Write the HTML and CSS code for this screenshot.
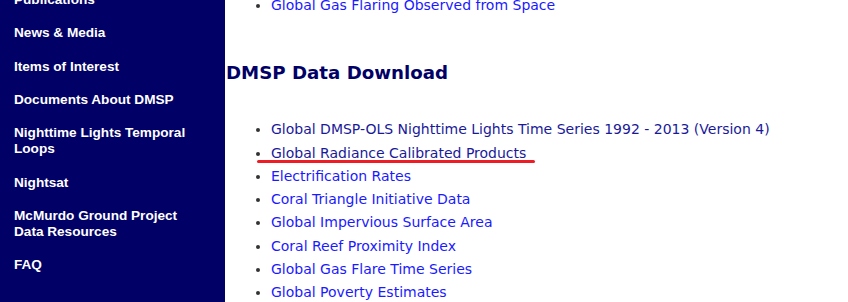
FILE: index.html
```html
<!DOCTYPE html>
<html lang="en">
<head>
  <meta charset="UTF-8" />
  <title>DMSP Data Download</title>
  <link rel="stylesheet" href="styles.css">
</head>
<body>

<div class="page">
  <!-- Left navigation -->
  <ul class="side-nav">
    <li><a href="#">Publications</a></li>
    <li><a href="#">News &amp; Media</a></li>
    <li><a href="#">Items of Interest</a></li>
    <li><a href="#">Documents About DMSP</a></li>
    <li><a href="#">Nighttime Lights Temporal Loops</a></li>
    <li><a href="#">Nightsat</a></li>
    <li><a href="#">McMurdo Ground Project Data Resources</a></li>
    <li><a href="#">FAQ</a></li>
  </ul>

  <!-- Main content -->
  <div class="content">
    <ul class="links top-links">
      <li><a href="#">Global Gas Flaring Observed from Space</a></li>
    </ul>

    <h2>DMSP Data Download</h2>

    <ul class="links">
      <li><a href="#" class="visited">Global DMSP-OLS Nighttime Lights Time Series 1992 - 2013 (Version 4)</a></li>
      <li><a href="#" class="visited marked">Global Radiance Calibrated Products</a></li>
      <li><a href="#">Electrification Rates</a></li>
      <li><a href="#">Coral Triangle Initiative Data</a></li>
      <li><a href="#">Global Impervious Surface Area</a></li>
      <li><a href="#">Coral Reef Proximity Index</a></li>
      <li><a href="#">Global Gas Flare Time Series</a></li>
      <li><a href="#">Global Poverty Estimates</a></li>
    </ul>
  </div>
</div>

</body>
</html>
```

FILE: styles.css
```css
body {
  margin: 0;
  background: #ffffff;
  font-family: "DejaVu Sans", Verdana, sans-serif;
  overflow: hidden;
}

.page {
  display: flex;
  height: 302px;
  overflow: hidden;
}

.side-nav {
  width: 225px;
  flex: none;
  background: #000066;
  margin: 0;
  padding: 0 20px 0 14px;
  box-sizing: border-box;
  list-style: none;
  margin-top: -16.5px;
  height: 330px;
}

.side-nav li {
  padding: 8.65px 0;
  font-family: "Liberation Sans", Arial, sans-serif;
  font-weight: bold;
  font-size: 13.6px;
  line-height: 16px;
}

.side-nav a {
  color: #ffffff;
  text-decoration: none;
}

.content {
  flex: 1;
  padding-left: 1px;
}

.links {
  margin: 0;
  padding-left: 45px;
  list-style: disc;
  color: #333333;
}

.links li {
  font-size: 14px;
  line-height: 23.3px;
}

.links a {
  color: #1a1aff;
  text-decoration: none;
}

.links a.visited {
  color: #1a1a99;
}

.top-links {
  margin-top: -6px;
}

h2 {
  margin: 44px 0 33px;
  font-size: 18.2px;
  line-height: 24px;
  font-weight: bold;
  color: #000066;
}

.marked {
  position: relative;
}

/* red annotation stroke under the second item */
.marked::after {
  content: "";
  position: absolute;
  left: -14px;
  right: -9px;
  bottom: -2px;
  height: 3px;
  border-radius: 2px;
  background: #ee1c24;
}
```
